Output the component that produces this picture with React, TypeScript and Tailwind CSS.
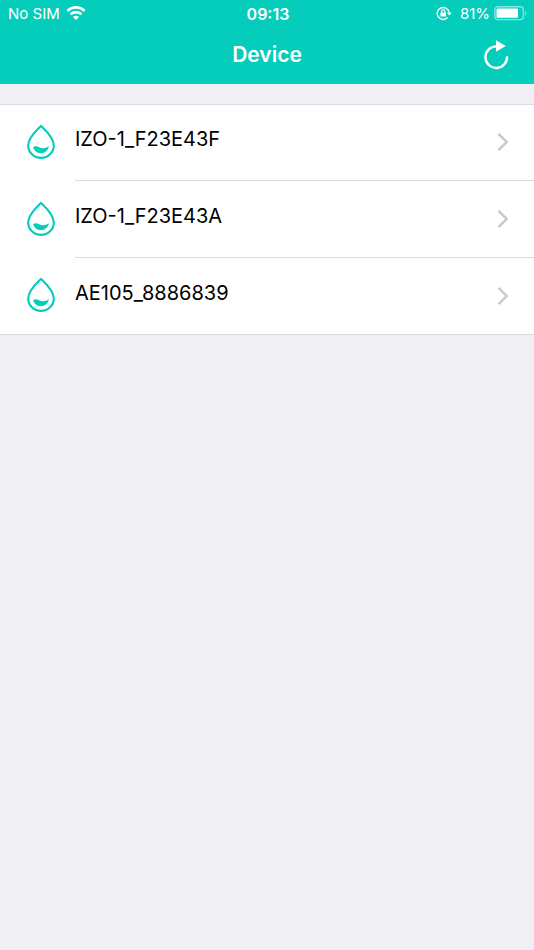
type Device = {
  id: number;
  name: string;
};

const devices: Device[] = [
  { id: 1, name: "IZO-1_F23E43F" },
  { id: 2, name: "IZO-1_F23E43A" },
  { id: 3, name: "AE105_8886839" },
];

function WifiIcon() {
  return (
    <svg className="w-5 h-4 shrink-0" viewBox="0 0 20 16" fill="none" stroke="#fff">
      <path d="M1.5 5a12 12 0 0 1 17 0" strokeWidth="2.8" />
      <path d="M4.6 8.400a7.600 7.600 0 0 1 10.800 0" strokeWidth="2.600" />
      <path d="M10 14.100 7 11.100a4.300 4.300 0 0 1 6 0z" fill="#fff" stroke="none" />
    </svg>
  );
}

function LockIcon() {
  return (
    <svg className="w-4 h-4 shrink-0" viewBox="0 0 16 16" fill="none" stroke="#fff">
      <path d="M11.6 11.6A6 6 0 1 1 13.1 6.2" strokeWidth="1.4" />
      <path d="M10.9 6.6h4.800l-2.400 3z" fill="#fff" stroke="none" />
      <rect x="4.4" y="6.4" width="5.6" height="4.2" rx="0.6" fill="#fff" stroke="none" />
      <path d="M5.5 7V5.6a1.700 1.700 0 0 1 3.400 0V7" strokeWidth="1.1" />
    </svg>
  );
}

function BatteryIcon() {
  return (
    <svg className="w-[34px] h-4 shrink-0" viewBox="0 0 34 16" fill="none">
      <rect x="0.8" y="0.8" width="28.6" height="12.8" rx="3" stroke="#fff" strokeOpacity="0.5" strokeWidth="1.4" />
      <rect x="2.5" y="2.6" width="21.5" height="9.2" rx="0.8" fill="#fff" />
      <path d="M31 4.9c1.600.5 1.600 4.100 0 4.600z" fill="#fff" fillOpacity="0.5" />
    </svg>
  );
}

function RefreshIcon() {
  return (
    <svg className="w-7 h-8" viewBox="0 0 28 32" fill="none">
      <path d="M25 17.3A10.8 10.8 0 1 1 14.2 7.400" stroke="#fff" strokeWidth="2.4" />
      <path d="M14 1.200 23.800 7 14 12.800z" fill="#fff" />
    </svg>
  );
}

function DropIcon() {
  return (
    <svg className="w-7 h-9 shrink-0" viewBox="0 0 28 36" fill="none">
      <path
        d="M14 1.9C12.6 3.5 1.2 13 1.2 21.6a12.8 12.3 0 0 0 25.6 0C26.8 13 15.4 3.5 14 1.9z"
        stroke="#04cdbc"
        strokeWidth="2.2"
        strokeLinejoin="round"
      />
      <path
        d="M6.2 23c1.600-1.200 3.800-1 5.900.2 3.600 2 6.800 1 9.800-.9-.6 4.200-4.200 7-8 6.900-3.900-.1-7-2.400-7.700-6.200z"
        fill="#04cdbc"
      />
    </svg>
  );
}

function ChevronIcon() {
  return (
    <svg className="w-3 h-5 shrink-0" viewBox="0 0 12 20" fill="none">
      <path d="M1.5 1.8 9.7 10l-8.200 8.200" stroke="#c7c7cc" strokeWidth="2.4" />
    </svg>
  );
}

function StatusBar() {
  return (
    <div className="grid grid-cols-[1fr_auto_1fr] items-center h-7 pl-2 pr-1.5 text-[15px]">
      <div className="flex items-center gap-1.5">
        <span>No SIM</span>
        <WifiIcon />
      </div>
      <span className="text-base font-semibold">09:13</span>
      <div className="flex items-center justify-end">
        <LockIcon />
        <span className="ml-2 mr-1">81%</span>
        <BatteryIcon />
      </div>
    </div>
  );
}

export default function App() {
  return (
    <div className="min-h-screen bg-[#efeff4] font-['Inter','Liberation_Sans',sans-serif]">
      <header className="bg-[#04cdbc] text-white">
        <StatusBar />
        <div className="grid grid-cols-[1fr_auto_1fr] items-center h-14 px-6 pb-0.5">
          <h1 className="col-start-2 text-[21px] leading-7 font-semibold">Device</h1>
          <button type="button" aria-label="Refresh" className="justify-self-end">
            <RefreshIcon />
          </button>
        </div>
      </header>

      <ul className="mt-5 bg-white border-y border-[#dcdce0]">
        {devices.map((device) => (
          <li key={device.id} className="group">
            <a href="#" className="flex items-center h-[77px] pl-[27px] group-first:h-[76px] group-last:h-[76px]">
              <div className="pb-0.5">
                <DropIcon />
              </div>
              <div className="flex flex-1 items-center justify-between h-full ml-5 pr-[25px] pb-px border-b border-[#dcdce0] group-last:border-b-0">
                <span className="pb-1.5 text-[20px] leading-7 text-black">{device.name}</span>
                <ChevronIcon />
              </div>
            </a>
          </li>
        ))}
      </ul>
    </div>
  );
}
